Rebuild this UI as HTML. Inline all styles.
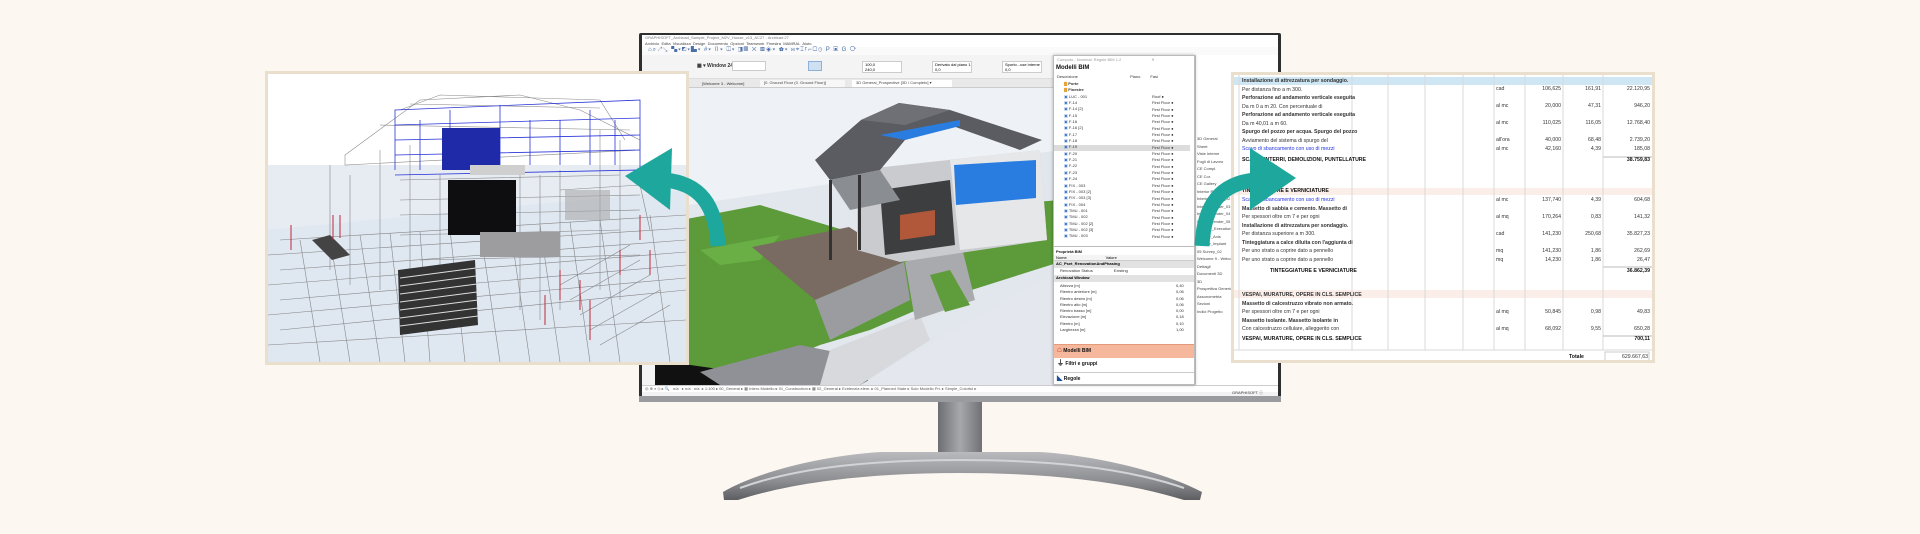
<!DOCTYPE html>
<html><head><meta charset="utf-8">
<style>
*{margin:0;padding:0;box-sizing:border-box}
body{width:1920px;height:534px;background:#fcf7f0;position:relative;overflow:hidden;font-family:"Liberation Sans",sans-serif}
.a{position:absolute}
.t{position:absolute;font-size:5px;color:#333;white-space:nowrap;line-height:6px}
.b{font-weight:bold;color:#111}
</style></head><body>

<svg class="a" style="left:0;top:0" width="1920" height="534">
<defs>
<linearGradient id="neck" x1="0" x2="1"><stop offset="0" stop-color="#6d6e72"/><stop offset=".5" stop-color="#a7a8ac"/><stop offset="1" stop-color="#707175"/></linearGradient>
<linearGradient id="base" x1="0" x2="0" y1="0" y2="1"><stop offset="0" stop-color="#b9babe"/><stop offset=".6" stop-color="#8d8e92"/><stop offset="1" stop-color="#5d5e62"/></linearGradient>
</defs>
<rect x="938" y="400" width="44" height="60" fill="url(#neck)"/>
<path d="M723,492 C760,470 830,455 880,452 L1040,452 C1090,455 1160,470 1202,492 L1200,500 L1184,500 C1120,480 1040,473 960,473 C880,473 800,480 738,500 L724,500 Z" fill="url(#base)"/>
<path d="M740,488 C800,466 880,460 960,460 C1040,460 1120,466 1184,488" stroke="#d2d3d6" stroke-width="2" fill="none"/>
</svg>

<div class="a" style="left:639px;top:33px;width:642px;height:369px;background:#2e2f31;border-radius:2px"></div>
<div class="a" style="left:639px;top:396px;width:642px;height:6px;background:#9a9b9e"></div>
<div class="a" style="left:642px;top:35px;width:636px;height:361px;background:#f2f2f2;overflow:hidden">
  <div class="a" style="left:0;top:0;width:636px;height:6px;background:#fff;font-size:4px;color:#777;padding-left:3px">GRAPHISOFT_Archicad_Sample_Project_M2V_House_v13_AC27 - Archicad 27</div>
  <div class="a" style="left:0;top:6px;width:636px;height:6px;background:#fff;font-size:4px;color:#444;padding-left:3px">Archivio &nbsp;Edita &nbsp;Visualizza &nbsp;Design &nbsp;Documento &nbsp;Opzioni &nbsp;Teamwork &nbsp;Finestra &nbsp;MAMRAL &nbsp;Aiuto</div>
  <div class="a" style="left:0;top:12px;width:636px;height:8px;background:#fafafa;font-size:6px;color:#4a6ea8;padding-left:6px;letter-spacing:1px">⌂⌕↗↘ ▚▾◩▾▙▾ #▾ ▯▾ ◫▾ ◨▦ ✕ ▩◈▾ ✿▾ ⋈⌖⌶⌈⌐▢⊙ P ▣ G ⟳</div>
  <div class="a" style="left:0;top:20px;width:636px;height:24px;background:#f4f4f4;border-bottom:1px solid #ddd"></div>
  <div class="t" style="left:55px;top:28px;font-size:5px;font-weight:bold">▦ ▾ Window 24</div>
  <div class="a" style="left:90px;top:26px;width:34px;height:10px;background:#fff;border:1px solid #ccc"></div>
  <div class="a" style="left:166px;top:26px;width:14px;height:10px;background:#cfe0f3;border:1px solid #8fb0d8"></div>
  <div class="a" style="left:220px;top:26px;width:40px;height:12px;background:#fff;border:1px solid #ccc;font-size:4px;padding-left:2px">100,0<br>240,0</div>
  <div class="a" style="left:290px;top:26px;width:40px;height:12px;background:#fff;border:1px solid #ccc;font-size:4px;padding-left:2px">Derivato dal piano 1<br>0,0</div>
  <div class="a" style="left:360px;top:26px;width:40px;height:12px;background:#fff;border:1px solid #ccc;font-size:4px;padding-left:2px">Sporto...use interne<br>0,0</div>
  <div class="a" style="left:0;top:44px;width:636px;height:9px;background:#e9e9e9;border-bottom:1px solid #ccc"></div>
  <div class="t" style="left:60px;top:46px;font-size:4px">[Welcome 3 - Welcome]</div>
  <div class="a" style="left:118px;top:45px;width:85px;height:7px;background:#f7f7f7;font-size:4px;color:#444;padding-left:4px">[0. Ground Floor (0. Ground Floor)]</div>
  <div class="a" style="left:210px;top:45px;width:100px;height:7px;background:#fff;font-size:4px;color:#444;padding-left:4px">3D General_Prospective [3D / Completo] ▾</div>
  <svg class="a" style="left:0;top:53px" width="636" height="297" viewBox="642 88 636 297">
    <rect x="642" y="88" width="636" height="297" fill="#eef1f5"/>
    <rect x="642" y="88" width="13" height="297" fill="#f4f4f4"/>
    <path d="M655,210 L1060,150 L1060,385 L655,385 Z" fill="#e2e7ee"/>
    <path d="M655,225 L760,205 L860,235 L1000,205 L1060,200 L1060,262 L940,300 L870,330 L820,345 L760,370 L700,372 L655,370 Z" fill="#5c9a3a"/>
    <path d="M700,250 L780,235 L760,260 L720,265 Z" fill="#6aae46"/>
    <path d="M655,360 L740,372 L760,385 L655,385 Z" fill="#111"/>
    <path d="M700,372 L800,345 L850,355 L820,385 L720,385 Z" fill="#8f9196"/>
    <path d="M820,385 L852,345 L870,385 Z" fill="#0d0d0d"/>
    <path d="M830,350 L920,315 L930,340 L860,385 L820,385 Z" fill="#d7d9dc"/>
    <path d="M860,385 L1060,270 L1060,385 Z" fill="#e4e8ee"/>
    <path d="M752,247 L849,227 L904,262 L815,300 Z" fill="#7a6b62"/>
    <path d="M815,300 L904,262 L910,300 L830,340 Z" fill="#9a9c9f"/>
    <path d="M905,262 L960,240 L975,300 L915,320 Z" fill="#a8aaad"/>
    <path d="M930,275 L950,270 L970,305 L945,312 Z" fill="#5e9c3c"/>
    <path d="M857,170 L1040,150 L1047,240 L900,262 L857,250 Z" fill="#c9cbce"/>
    <path d="M950,160 L1040,150 L1047,240 L960,250 Z" fill="#e6e7e9"/>
    <path d="M880,190 L950,180 L955,245 L885,255 Z" fill="#3d3e40"/>
    <path d="M900,215 L935,210 L935,235 L900,240 Z" fill="#b2583a"/>
    <path d="M954,165 L1036,160 L1036,198 L956,205 Z" fill="#2a7de0"/>
    <path d="M815,160 L861,120 L899,103 L950,110 L1042,140 L1020,150 L950,125 L905,140 L880,170 L830,180 Z" fill="#5a5c61"/>
    <path d="M861,120 L899,103 L950,110 L905,125 Z" fill="#6e7075"/>
    <path d="M880,135 L960,120 L960,126 L905,140 Z" fill="#2a7de0"/>
    <path d="M830,180 L880,170 L900,200 L850,210 Z" fill="#8a8d92"/>
    <rect x="829" y="180" width="3" height="80" fill="#333"/>
    <rect x="858" y="175" width="3" height="75" fill="#333"/>
  </svg>
  <div class="a" style="left:553px;top:20px;width:83px;height:330px;background:#fff;border-left:1px solid #ccc"></div>
  <div class="t" style="left:555px;top:100px;font-size:4px;line-height:7.5px;color:#444">3D General<br>Sheet<br>Viste Interne<br>Fogli di Lavoro<br>CE Compl.<br>CE Cor.<br>CE Gallery<br>Interior Render_01<br>Interior Render_02<br>Interior Render_03<br>Interior Render_04<br>Interior Render_05<br>R4 Roof_Execution<br>03 Stair_Anis<br>04 Stair_Implant<br>05 Survey_02<br>Welcome 9 - Welcome<br>Dettagli<br>Documenti 3D<br>3D<br>Prospettiva Generica<br>Assonometria<br>Sezioni<br>Indici Progetto</div>
  <div class="a" style="left:0;top:350px;width:636px;height:7px;background:#fff;border-top:1px solid #ccc;font-size:4px;color:#555;padding-left:3px;line-height:6px">◎ ⊕ ⌕ ◇ ▸ 🔍 &nbsp; n/a &nbsp; ▸ n/a &nbsp; n/a &nbsp;▸ 1:100 ▸ 00_General ▸ ▦ Intero Modello ▸ 01_Construction ▸ ▦ 02_General ▸ Evidenzia elem. ▸ 01_Planned State ▸ Solo Modello Pri. ▸ Simple_Colorful ▸</div>
  <div class="t" style="left:590px;top:355px;font-size:4px">GRAPHISOFT ⓘ</div>
</div>

<div class="a" style="left:1053px;top:55px;width:142px;height:330px;background:#fff;border:1px solid #bbb;box-shadow:0 0 3px rgba(0,0,0,.3);overflow:hidden">
  <div class="t" style="left:3px;top:1px;color:#999;font-size:4px">Computo - Nominal: Regole BIM 1.2 &nbsp; &nbsp; &nbsp; &nbsp; &nbsp; &nbsp; &nbsp; &nbsp; &nbsp; &nbsp; &nbsp; &nbsp; &nbsp; ✕</div>
  <div class="t b" style="left:2px;top:9px;font-size:6px">Modelli BIM</div>
  <div class="t" style="left:3px;top:18px;font-size:4px">Descrizione &nbsp; &nbsp; &nbsp; &nbsp; &nbsp; &nbsp; &nbsp; &nbsp; &nbsp; &nbsp; &nbsp; &nbsp; &nbsp; &nbsp; &nbsp; &nbsp; &nbsp; &nbsp; &nbsp; &nbsp; &nbsp; &nbsp; &nbsp; Piano &nbsp; &nbsp; &nbsp; &nbsp; Fasi</div>
  <div class="a" style="left:0;top:89px;width:136px;height:6px;background:#dcdcdc"></div>
  <div class="t" style="left:10px;top:25px;font-size:4px;line-height:6.35px"><span style="color:#e8a23a">▇</span> <b>Porte</b><br><span style="color:#e8a23a">▇</span> <b>Finestre</b><br>
  <span style="color:#3a78c8">▣</span> LUC - 001<br><span style="color:#3a78c8">▣</span> F-14<br><span style="color:#3a78c8">▣</span> F-14 [2]<br><span style="color:#3a78c8">▣</span> F-15<br><span style="color:#3a78c8">▣</span> F-16<br><span style="color:#3a78c8">▣</span> F-16 [2]<br><span style="color:#3a78c8">▣</span> F-17<br><span style="color:#3a78c8">▣</span> F-18<br><span style="color:#3a78c8">▣</span> F-19<br><span style="color:#3a78c8">▣</span> F-20<br><span style="color:#3a78c8">▣</span> F-21<br><span style="color:#3a78c8">▣</span> F-22<br><span style="color:#3a78c8">▣</span> F-23<br><span style="color:#3a78c8">▣</span> F-24<br><span style="color:#3a78c8">▣</span> FIX - 003<br><span style="color:#3a78c8">▣</span> FIX - 003 [2]<br><span style="color:#3a78c8">▣</span> FIX - 003 [3]<br><span style="color:#3a78c8">▣</span> FIX - 004<br><span style="color:#3a78c8">▣</span> TMU - 001<br><span style="color:#3a78c8">▣</span> TMU - 002<br><span style="color:#3a78c8">▣</span> TMU - 002 [2]<br><span style="color:#3a78c8">▣</span> TMU - 002 [3]<br><span style="color:#3a78c8">▣</span> TMU - 003</div>
  <div class="t" style="left:98px;top:38px;font-size:4px;line-height:6.35px">Roof ●<br>First Floor ●<br>First Floor ●<br>First Floor ●<br>First Floor ●<br>First Floor ●<br>First Floor ●<br>First Floor ●<br>First Floor ●<br>First Floor ●<br>First Floor ●<br>First Floor ●<br>First Floor ●<br>First Floor ●<br>First Floor ●<br>First Floor ●<br>First Floor ●<br>First Floor ●<br>First Floor ●<br>First Floor ●<br>First Floor ●<br>First Floor ●<br>First Floor ●</div>
  <div class="a" style="left:0;top:190px;width:142px;height:1px;background:#bbb"></div>
  <div class="t b" style="left:2px;top:193px;font-size:4px">Proprietà BIM</div>
  <div class="a" style="left:0;top:199px;width:142px;height:6px;background:#f4f4f4;border-bottom:1px solid #ccc;font-size:4px;padding-left:2px">Nome &nbsp; &nbsp; &nbsp; &nbsp; &nbsp; &nbsp; &nbsp; &nbsp; &nbsp; &nbsp; &nbsp; &nbsp; &nbsp; &nbsp; &nbsp; &nbsp; &nbsp; Valore</div>
  <div class="a" style="left:0;top:205px;width:142px;height:7px;background:#e2e2e2;font-size:4px;font-weight:bold;padding-left:2px">AC_Pset_RenovationAndPhasing</div>
  <div class="t" style="left:6px;top:212px;font-size:4px">Renovation Status &nbsp; &nbsp; &nbsp; &nbsp; &nbsp; &nbsp; &nbsp; &nbsp; &nbsp; Existing</div>
  <div class="a" style="left:0;top:219px;width:142px;height:7px;background:#e2e2e2;font-size:4px;font-weight:bold;padding-left:2px">Archicad Window</div>
  <div class="t" style="left:6px;top:227px;font-size:4px;line-height:6.3px">Altezza [m]<br>Rientro anteriore [m]<br>Rientro destro [m]<br>Rientro alto [m]<br>Rientro basso [m]<br>Elevazione [m]<br>Rientro [m]<br>Larghezza [m]</div>
  <div class="t" style="left:122px;top:227px;font-size:4px;line-height:6.3px">0,40<br>0,06<br>0,06<br>0,06<br>0,00<br>0,18<br>0,10<br>1,00</div>
  <div class="a" style="left:0;top:288px;width:142px;height:14px;background:#f6b89c;border-top:1px solid #e59b7b"></div>
  <div class="t b" style="left:3px;top:291px;font-size:5px"><span style="color:#d0282a;font-size:8px">⌂</span> Modelli BIM</div>
  <div class="t b" style="left:3px;top:305px;font-size:5px"><span style="font-size:7px">⏚</span> Filtri e gruppi</div>
  <div class="a" style="left:0;top:316px;width:142px;height:1px;background:#ccc"></div>
  <div class="t b" style="left:3px;top:320px;font-size:5px"><span style="color:#1f4fa0;font-size:7px">◣</span> Regole</div>
</div>

<div class="a" style="left:265px;top:71px;width:424px;height:294px;background:#eadfcc"></div>
<svg class="a" style="left:268px;top:74px" width="418" height="288" viewBox="268 74 418 288">
  <rect x="268" y="74" width="418" height="288" fill="#fff"/>
  <rect x="268" y="165" width="418" height="197" fill="#e6ecf2"/>
  <path d="M268,230 L686,190 L686,362 L268,362 Z" fill="#dfe7f0"/>
  <g stroke="#777" stroke-width=".6" fill="none" opacity=".85">
    <path d="M345,155 L420,100 L520,95 L580,110 L640,140 L640,150 L345,165 Z"/>
    <path d="M400,110 L440,95 L600,100 L625,140 M410,104 L600,108 M380,125 L630,130"/>
    <path d="M280,240 L686,215 M280,270 L686,240 M280,300 L686,265 M280,330 L686,290 M268,345 L686,320 M268,255 L686,228 M268,285 L686,252 M268,315 L686,278"/>
    <path d="M300,240 L320,362 M330,238 L350,362 M360,235 L380,362 M390,233 L405,362 M420,232 L430,362 M450,230 L465,362 M480,228 L500,362 M510,226 L530,362 M540,225 L560,362 M570,222 L590,362 M600,220 L620,362 M650,215 L670,362"/>
    <path d="M380,150 L380,290 M410,145 L410,300 M600,130 L600,290 M620,140 L620,300 M540,175 L540,320 M560,170 L560,310 M440,175 L440,300 M520,175 L520,310"/>
    <path d="M330,165 L330,270 M350,175 L350,285 M560,190 L640,185 L650,230"/>
    <path d="M400,180 L620,175 M400,235 L620,230 M420,260 L640,255 M400,200 L640,195 M400,215 L640,210"/>
    <path d="M570,300 L640,260 M580,315 L650,275 M590,330 L660,290 M600,345 L670,305 M560,285 L630,245"/>
  </g>
  <g stroke="#2a35d8" stroke-width=".8" fill="none">
    <path d="M395,170 L395,110 L640,100 L640,170 L395,175"/>
    <path d="M420,170 L420,120 M450,170 L450,110 M500,168 L500,105 M530,165 L530,120 M560,165 L560,120 M590,165 L590,110 M615,165 L615,120"/>
    <path d="M395,140 L640,135 M395,125 L640,118 M395,155 L640,150"/>
  </g>
  <rect x="442" y="128" width="58" height="42" fill="#1f2aa8"/>
  <rect x="448" y="180" width="68" height="55" fill="#0e0e10"/>
  <rect x="470" y="165" width="55" height="10" fill="#cfcfcf"/>
  <rect x="480" y="232" width="80" height="25" fill="#9d9d9f"/>
  <rect x="565" y="190" width="45" height="30" fill="#aaa" opacity=".6"/>
  <path d="M398,270 L475,260 L478,325 L400,335 Z" fill="#333"/>
  <g stroke="#ddd" stroke-width="1"><path d="M400,278 L476,268 M400,286 L476,276 M400,294 L477,284 M400,302 L477,292 M400,310 L478,300 M400,318 L478,308 M400,326 L478,316"/></g>
  <path d="M312,240 L330,235 L350,255 L332,260 Z" fill="#444"/>
  <g stroke="#c0283a" stroke-width="1"><path d="M291,225 L291,250 M333,215 L333,240 M340,215 L340,238 M640,215 L640,240 M620,250 L620,275 M650,250 L650,275 M560,270 L560,300 M580,280 L580,310 M545,295 L545,325 M590,300 L590,340"/></g>
</svg>

<div class="a" style="left:1231px;top:72px;width:424px;height:291px;background:#eadfcc"></div>
<div class="a" style="left:1234px;top:75px;width:418px;height:285px;background:#fff;overflow:hidden">
  <div class="a" style="left:0;top:2px;width:418px;height:8px;background:#cfe6f5"></div>
  <div class="a" style="left:0;top:113px;width:418px;height:7px;background:#fbeee9"></div>
  <div class="a" style="left:0;top:215px;width:418px;height:8px;background:#fbeee9"></div>
  <svg class="a" style="left:0;top:0" width="418" height="285">
    <g stroke="#d9d9d9" stroke-width="1">
      <path d="M5,0 V275 M118,0 V275 M154,0 V275 M191,0 V275 M229,0 V275 M260,0 V275 M291,0 V275 M329,0 V275 M369,0 V275"/>
      <path d="M0,275 H418"/>
    </g>
    <g stroke="#bbb"><path d="M369,82 H418 M369,192 H418 M369,261 H418"/></g>
    <rect x="371" y="277" width="44" height="9" fill="none" stroke="#ccc"/>
  </svg>
  <div class="t" style="left:8px;top:2px;line-height:8.5px;font-size:5.2px">
  <b>Installazione di attrezzatura per sondaggio.</b><br>Per distanza fino a m 300.<br><b>Perforazione ad andamento verticale eseguita</b><br>Da m 0 a m 20. Con percentuale di<br><b>Perforazione ad andamento verticale eseguita</b><br>Da m 40,01 a m 60.<br><b>Spurgo del pozzo per acqua. Spurgo del pozzo</b><br>Avviamento del sistema di spurgo del<br><span style="color:#2233dd">Scavo di sbancamento con uso di mezzi</span></div>
  <div class="t b" style="left:8px;top:82px;font-size:5.2px">SCAVI, RINTERRI, DEMOLIZIONI, PUNTELLATURE</div>
  <div class="t b" style="left:8px;top:113px;font-size:5.2px">TINTEGGIATURE E VERNICIATURE</div>
  <div class="t" style="left:8px;top:121px;line-height:8.5px;font-size:5.2px"><span style="color:#2233dd">Scavo di sbancamento con uso di mezzi</span><br><b>Massetto di sabbia e cemento. Massetto di</b><br>Per spessori oltre cm 7 e per ogni<br><b>Installazione di attrezzatura per sondaggio.</b><br>Per distanza superiore a m 300.<br><b>Tinteggiatura a calce diluita con l'aggiunta di</b><br>Per uno strato a coprire dato a pennello<br>Per uno strato a coprire dato a pennello</div>
  <div class="t b" style="left:36px;top:193px;font-size:5.2px">TINTEGGIATURE E VERNICIATURE</div>
  <div class="t" style="left:8px;top:216px;line-height:8.5px;font-size:5.2px"><b>VESPAI, MURATURE, OPERE IN CLS. SEMPLICE</b><br><b>Massetto di calcestruzzo vibrato non armato.</b><br>Per spessori oltre cm 7 e per ogni<br><b>Massetto isolante. Massetto isolante in</b><br>Con calcestruzzo cellulare, alleggerito con</div>
  <div class="t b" style="left:8px;top:261px;font-size:5.2px">VESPAI, MURATURE, OPERE IN CLS. SEMPLICE</div>
  <div class="t" style="left:262px;top:10px;line-height:8.5px;font-size:5.2px">cad<br><br>al mc<br><br>al mc<br><br>all'ora<br>al mc</div>
  <div class="t" style="left:262px;top:121px;line-height:8.5px;font-size:5.2px">al mc<br><br>al mq<br><br>cad<br><br>mq<br>mq</div>
  <div class="t" style="left:262px;top:233px;line-height:8.5px;font-size:5.2px">al mq<br><br>al mq</div>
  <div class="t" style="left:292px;top:10px;width:35px;text-align:right;line-height:8.5px;font-size:5.2px">106,625<br><br>20,000<br><br>110,025<br><br>40,000<br>42,160</div>
  <div class="t" style="left:330px;top:10px;width:37px;text-align:right;line-height:8.5px;font-size:5.2px">161,91<br><br>47,31<br><br>116,05<br><br>68,48<br>4,39</div>
  <div class="t" style="left:370px;top:10px;width:46px;text-align:right;line-height:8.5px;font-size:5.2px">22.120,95<br><br>946,20<br><br>12.768,40<br><br>2.739,20<br>185,08</div>
  <div class="t b" style="left:370px;top:82px;width:46px;text-align:right;font-size:5.2px">38.759,83</div>
  <div class="t" style="left:292px;top:121px;width:35px;text-align:right;line-height:8.5px;font-size:5.2px">137,740<br><br>170,264<br><br>141,230<br><br>141,230<br>14,230</div>
  <div class="t" style="left:330px;top:121px;width:37px;text-align:right;line-height:8.5px;font-size:5.2px">4,39<br><br>0,83<br><br>250,68<br><br>1,86<br>1,86</div>
  <div class="t" style="left:370px;top:121px;width:46px;text-align:right;line-height:8.5px;font-size:5.2px">604,68<br><br>141,32<br><br>35.827,23<br><br>262,69<br>26,47</div>
  <div class="t b" style="left:370px;top:193px;width:46px;text-align:right;font-size:5.2px">36.862,39</div>
  <div class="t" style="left:292px;top:233px;width:35px;text-align:right;line-height:8.5px;font-size:5.2px">50,845<br><br>68,092</div>
  <div class="t" style="left:330px;top:233px;width:37px;text-align:right;line-height:8.5px;font-size:5.2px">0,98<br><br>9,55</div>
  <div class="t" style="left:370px;top:233px;width:46px;text-align:right;line-height:8.5px;font-size:5.2px">49,83<br><br>650,28</div>
  <div class="t b" style="left:370px;top:261px;width:46px;text-align:right;font-size:5.2px">700,11</div>
  <div class="t b" style="left:335px;top:279px;font-size:5.2px">Totale</div>
  <div class="t" style="left:372px;top:279px;width:42px;text-align:right;font-size:5.2px">629.667,63</div>
</div>

<svg class="a" style="left:0;top:0" width="1920" height="534">
  <g fill="none" stroke="#1ea89d" stroke-width="15" stroke-linecap="butt">
    <path d="M718,246 C716,205 700,183 664,180"/>
    <path d="M1202,246 C1204,205 1220,183 1256,180"/>
  </g>
  <path d="M625,176 L672,148 L670,210 Z" fill="#1ea89d"/>
  <path d="M1296,178 L1250,148 L1250,210 Z" fill="#1ea89d"/>
</svg>
</body></html>
